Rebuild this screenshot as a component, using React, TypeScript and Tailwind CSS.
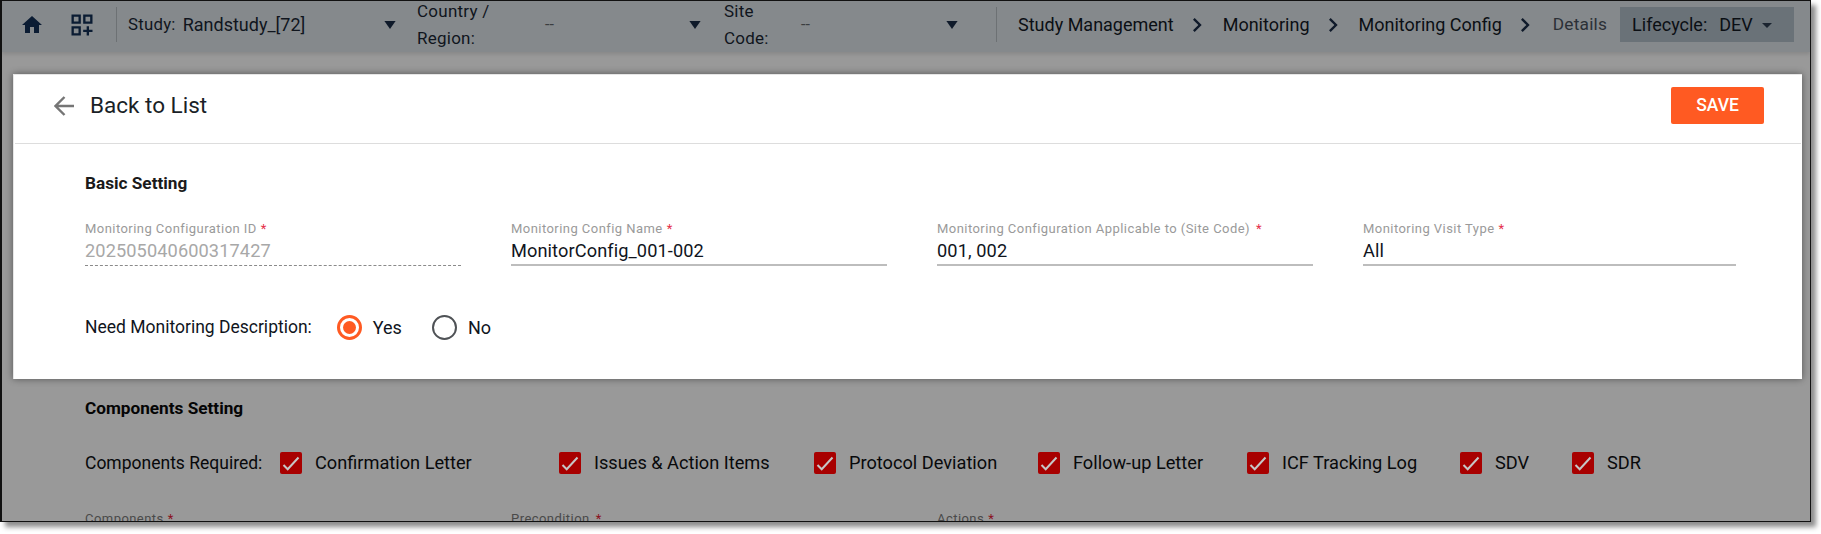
import React from "react";
import { MdHome, MdOutlineDashboardCustomize, MdArrowDropDown, MdChevronRight } from "react-icons/md";

const Caret = ({ className }: { className: string }) => (
  <svg viewBox="0 0 14 10" className={className} fill="#0f1a2a">
    <path d="M0 0h14L7 10z" />
  </svg>
);

const Field = ({ label, value, muted, gap }: { label: string; value: string; muted?: boolean; gap?: boolean }) => (
  <div className="flex flex-col">
    <div className="h-[16px] text-[13px] leading-[16px] tracking-[0.45px] text-[#9a9a9a] whitespace-nowrap">
      {label}
      <span className={gap ? "ml-[6px] text-[#e5304a]" : "ml-[4px] text-[#e5304a]"}>*</span>
    </div>
    <div className={muted ? "mt-[2px] h-[27px] text-[18.2px] leading-[24px] tracking-[0.1px] text-[#a8a8a8] border-b border-dashed border-[#8a8a8a]" : "mt-[2px] h-[27px] text-[18.2px] leading-[24px] tracking-[0.1px] text-[#10151d] border-b-2 border-[#bdbdbd]"}>
      {value}
    </div>
  </div>
);

const Crumb = ({ text }: { text: string }) => (
  <>
    <span className="text-[18px] text-[#0b0f14] whitespace-nowrap">{text}</span>
    <MdChevronRight className="ml-[9px] mr-[12px] text-[#0f1a2a]" size={28} />
  </>
);

const checks = [
  { label: "Confirmation Letter", cls: "w-[279px]" },
  { label: "Issues & Action Items", cls: "w-[255px]" },
  { label: "Protocol Deviation", cls: "w-[224px]" },
  { label: "Follow-up Letter", cls: "w-[209px]" },
  { label: "ICF Tracking Log", cls: "w-[213px]" },
  { label: "SDV", cls: "w-[112px]" },
  { label: "SDR", cls: "w-[80px]" },
];

export default function App() {
  return (
    <div className="w-[1821px] h-[534px] bg-white overflow-hidden font-['Roboto',sans-serif]">
      <div className="w-[1811px] h-[522px] bg-[#999999] border border-[#111111] border-l-2 shadow-[5px_5px_5px_rgba(0,0,0,0.45)] overflow-hidden">
        {/* top bar */}
        <div className="h-[51px] pb-[4px] bg-[#85898c] shadow-[0_2px_4px_rgba(0,0,0,0.12)] flex items-center relative">
          <MdHome className="ml-[18px] text-[#0b1c33]" size={24} />
          <MdOutlineDashboardCustomize className="ml-[24px] text-[#0b1c33]" size={28} />
          <div className="ml-[20px] w-px h-[35px] bg-[#6d7174]" />
          <div className="ml-[11px] w-[268px] flex items-center text-[16.8px] text-[#10151d] whitespace-nowrap">
            <span className="tracking-[0.25px]">Study:</span>
            <span className="ml-[7px] text-[18px]">Randstudy_[72]</span>
            <Caret className="ml-auto w-[12px] h-[8px]" />
          </div>
          <div className="ml-[21px] w-[284px] flex items-center text-[17px] text-[#10151d]">
            <div className="w-[128px] leading-[27px] tracking-[0.25px]">
              Country /<br />Region:
            </div>
            <span className="text-[#3a3d40] text-[16px]">--</span>
            <Caret className="ml-auto w-[12px] h-[8px]" />
          </div>
          <div className="ml-[23px] w-[234px] flex items-center text-[17px] text-[#10151d]">
            <div className="w-[77px] leading-[27px] tracking-[0.25px]">
              Site<br />Code:
            </div>
            <span className="text-[#3a3d40] text-[16px]">--</span>
            <Caret className="ml-auto w-[12px] h-[8px]" />
          </div>
          <div className="ml-[38px] w-px h-[35px] bg-[#6d7174]" />
          <div className="ml-[21px] flex items-center">
            <Crumb text="Study Management" />
            <Crumb text="Monitoring" />
            <Crumb text="Monitoring Config" />
            <span className="ml-[2px] text-[17.3px] text-[#2b3036] tracking-[0.2px]">Details</span>
          </div>
          <div className="ml-[13px] w-[174px] h-[35px] bg-[#6a7278] flex items-center pl-[12px] text-[18px] text-[#0b0f14] whitespace-nowrap">
            <span>Lifecycle:</span>
            <span className="ml-[12px]">DEV</span>
            <MdArrowDropDown className="ml-[2px] text-[#1b2430]" size={24} />
          </div>
        </div>

        {/* highlighted card */}
        <div className="ml-[11px] mt-[22px] w-[1789px] h-[305px] bg-white border-t border-l border-[#e6e6e6] shadow-[0_0_7px_rgba(0,0,0,0.45)]">
          <div className="h-[69px] pb-[7px] flex items-center border-b border-[#dddddd] mx-[1px]">
            <svg viewBox="0 0 20 20" className="ml-[39px] w-[20px] h-[20px]" fill="none" stroke="#757575" strokeWidth="2.4">
              <path d="M20 10H2M10.5 1L1.5 10l9 9" />
            </svg>
            <span className="ml-[16px] text-[22.5px] text-[#1a1f27]">Back to List</span>
            <button className="ml-auto mr-[37px] w-[93px] h-[37px] rounded-[2px] bg-[#ff5a22] text-white text-[17.5px] font-medium">SAVE</button>
          </div>
          <div className="pl-[71px]">
            <div className="mt-[29px] h-[20px] text-[17.2px] leading-[20px] font-bold text-[#1a1a1a]">Basic Setting</div>
            <div className="mt-[28px] grid grid-cols-[376px_376px_376px_373px] gap-x-[50px]">
              <Field label="Monitoring Configuration ID" value="202505040600317427" muted />
              <Field label="Monitoring Config Name" value="MonitorConfig_001-002" />
              <Field label="Monitoring Configuration Applicable to (Site Code)" value="001, 002" gap />
              <Field label="Monitoring Visit Type" value="All" />
            </div>
            <div className="mt-[48px] flex items-center text-[17.5px] text-[#10151d]">
              <span>Need Monitoring Description:</span>
              <span className="ml-[25px] w-[25px] h-[25px] rounded-full border-[3px] border-[#ff5a22] flex items-center justify-center">
                <span className="w-[13px] h-[13px] rounded-full bg-[#ff5a22]" />
              </span>
              <span className="ml-[11px] text-[18px]">Yes</span>
              <span className="ml-[30px] w-[25px] h-[25px] rounded-full border-[2.5px] border-[#4f5256]" />
              <span className="ml-[11px] text-[18px]">No</span>
            </div>
          </div>
        </div>

        {/* dimmed section */}
        <div className="pl-[83px]">
          <div className="mt-[19px] h-[20px] text-[17.2px] leading-[20px] font-bold text-[#050505]">Components Setting</div>
          <div className="mt-[33px] h-[24px] flex items-center text-[18.2px] text-[#08090b] whitespace-nowrap">
            <span className="w-[195px] text-[17.5px]">Components Required:</span>
            {checks.map((c) => (
              <div key={c.label} className={"flex items-center " + c.cls}>
                <span className="w-[22px] h-[22px] rounded-[2px] bg-[#a80000] flex items-center justify-center">
                  <svg viewBox="0 0 22 22" className="w-[22px] h-[22px]" fill="none" stroke="#c6c6c6" strokeWidth="2">
                    <path d="M3.5 13l4.2 4.3L18.5 5.5" />
                  </svg>
                </span>
                <span className="ml-[13px]">{c.label}</span>
              </div>
            ))}
          </div>
          <div className="mt-[36px] grid grid-cols-[376px_376px_376px] gap-x-[50px] text-[13px] leading-[16px] tracking-[0.45px] text-[#4a4a4a]">
            <div>Components<span className="ml-[4px] text-[#8a1020]">*</span></div>
            <div>Precondition<span className="ml-[6px] text-[#8a1020]">*</span></div>
            <div>Actions<span className="ml-[4px] text-[#8a1020]">*</span></div>
          </div>
        </div>
      </div>
    </div>
  );
}
